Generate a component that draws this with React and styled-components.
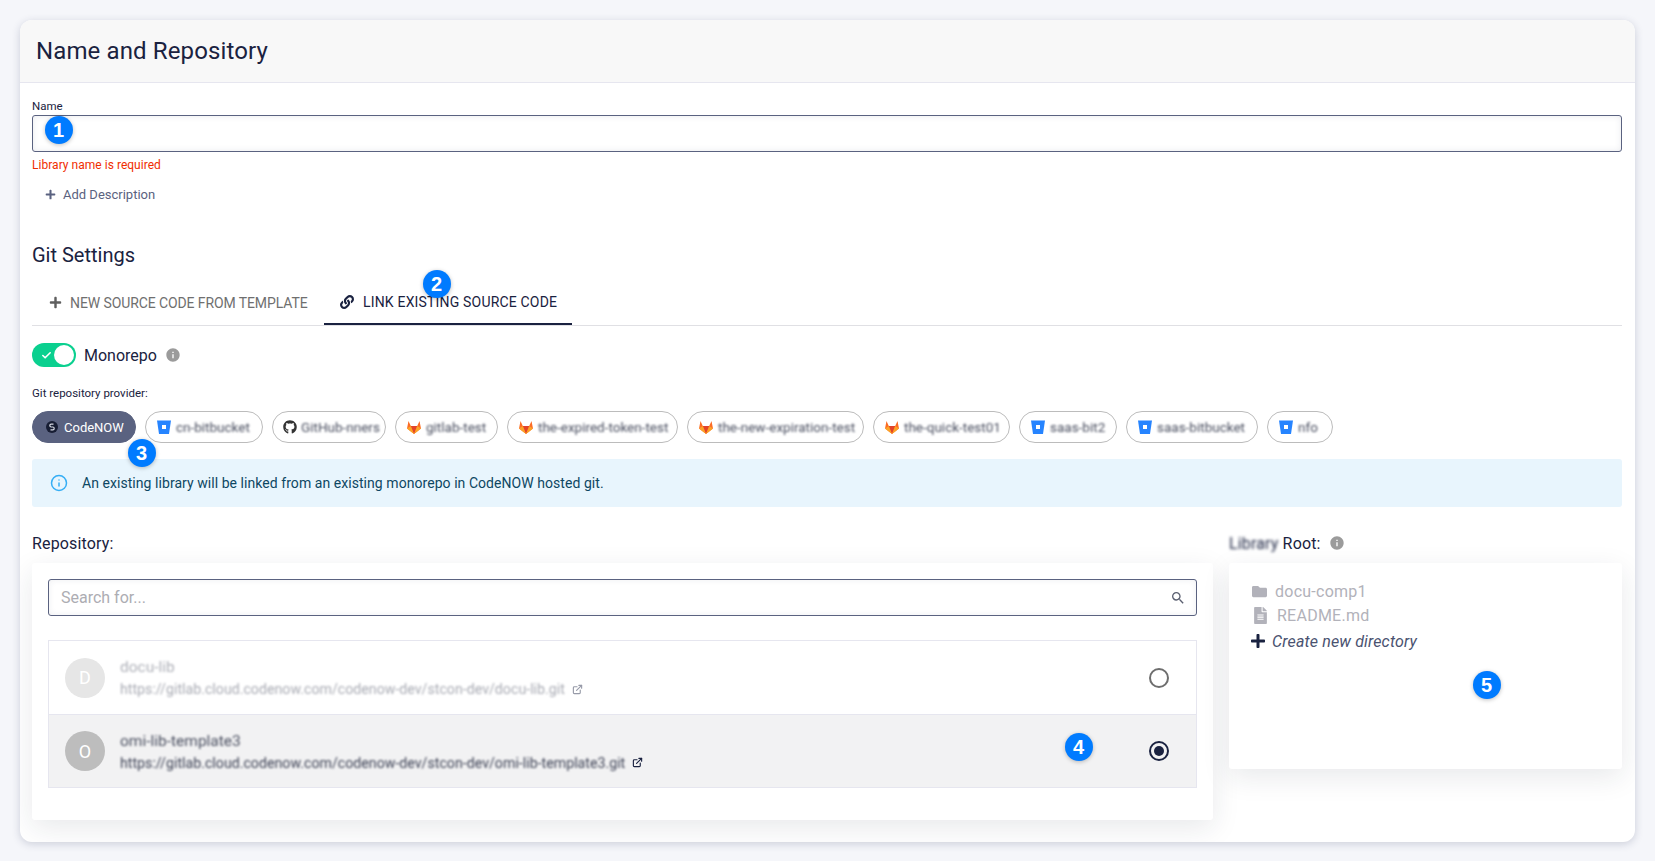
import React from "react";
import styled, { createGlobalStyle } from "styled-components";
import { FaGithub, FaLink, FaPlus, FaFolder, FaFileAlt } from "react-icons/fa";
import { MdInfo, MdSearch } from "react-icons/md";
import { Info, ExternalLink, Check } from "lucide-react";

const Global = createGlobalStyle`
  html, body { margin: 0; padding: 0; background: #f5f6fa; }
  body { font-family: Roboto, "Liberation Sans", sans-serif; color: #1a2240; }
  * { box-sizing: border-box; }
`;

const Card = styled.div`
  position: relative;
  margin: 20px 20px 20px;
  height: 822px;
  background: #fff;
  border-radius: 12px;
  box-shadow: 0 2px 8px rgba(40, 50, 90, 0.2);
  overflow: hidden;
`;
const Header = styled.div`
  height: 63px;
  padding-left: 16px;
  display: flex;
  align-items: center;
  background: #f8f8f8;
  border-bottom: 1.5px solid #e6e6ef;
`;
const Title = styled.h1`
  margin: 0;
  font-size: 24px;
  font-weight: 400;
  letter-spacing: 0.12px;
  color: #1a2240;
`;
const Body = styled.div`
  padding: 0 13px 0 12px;
`;
const SmallLabel = styled.div`
  font-size: 11.5px;
  line-height: 14px;
  margin-top: ${(p) => p.$mt}px;
  color: #1a2240;
`;
const NameInput = styled.div`
  height: 37px;
  margin-top: 2px;
  border: 1px solid #5a6280;
  border-radius: 3px;
  box-shadow: inset 0 0 6px rgba(40, 50, 90, 0.1);
`;
const ErrorText = styled.div`
  margin-top: 6px;
  font-size: 12px;
  letter-spacing: 0.03px;
  line-height: 14px;
  color: #f02d00;
`;
const AddRow = styled.div`
  display: flex;
  align-items: center;
  gap: 7px;
  height: 24px;
  margin-top: 10px;
  padding-left: 13px;
  font-size: 13px;
  color: #5a6280;
`;
const SectionTitle = styled.h2`
  margin: 35px 0 0;
  font-size: 20px;
  line-height: 28px;
  font-weight: 400;
`;
const Tabs = styled.div`
  display: flex;
  margin-top: 9px;
  border-bottom: 1px solid #e0e0e4;
`;
const Tab = styled.div`
  height: 47px;
  width: ${(p) => p.$w}px;
  padding: 2px 0 0 ${(p) => p.$pl}px;
  display: flex;
  align-items: center;
  gap: ${(p) => (p.$active ? 9 : 8)}px;
  font-size: 14px;
  letter-spacing: ${(p) => (p.$active ? "0.18px" : "-0.1px")};
  white-space: nowrap;
  color: ${(p) => (p.$active ? "#1a2240" : "#6f6f6f")};
  border-bottom: ${(p) => (p.$active ? "2.5px solid #1a2240" : "none")};
`;
const ToggleRow = styled.div`
  display: flex;
  align-items: center;
  height: 24px;
  margin-top: 17px;
  font-size: 16px;
`;
const Toggle = styled.div`
  position: relative;
  width: 44px;
  height: 24px;
  margin-right: 8px;
  border-radius: 12px;
  background: #0ad08f;
  display: flex;
  align-items: center;
  padding-left: 9px;
  color: #fff;
`;
const Knob = styled.span`
  position: absolute;
  right: 2px;
  top: 2px;
  width: 20px;
  height: 20px;
  border-radius: 50%;
  background: #fff;
`;
const InfoDot = styled(MdInfo)`
  color: #9b9b9b;
  margin-left: ${(p) => p.$ml}px;
`;
const Chips = styled.div`
  display: flex;
  gap: 9px;
  margin-top: 11px;
`;
const Chip = styled.div`
  width: ${(p) => p.$w}px;
  height: 32px;
  padding-left: ${(p) => (p.$selected ? 13 : 10)}px;
  display: flex;
  align-items: center;
  gap: ${(p) => (p.$selected ? 6 : 4)}px;
  flex: none;
  border-radius: 16px;
  font-size: ${(p) => (p.$selected ? 13 : 13.5)}px;
  white-space: nowrap;
  overflow: hidden;
  color: ${(p) => (p.$selected ? "#fff" : "#4a4f60")};
  background: ${(p) => (p.$selected ? "#5a6280" : "#fff")};
  border: 1px solid ${(p) => (p.$selected ? "#5a6280" : "#bcbcbc")};
`;
const Blur = styled.span`
  filter: blur(${(p) => p.$r || 1.2}px);
`;
const Alert = styled.div`
  display: flex;
  align-items: center;
  gap: 14px;
  height: 48px;
  margin-top: 16px;
  padding: 0 0 0 18px;
  border-radius: 3px;
  background: #e8f5fd;
  color: #0d4763;
  font-size: 14px;
  letter-spacing: 0.055px;
`;
const AlertIcon = styled(Info)`
  color: #35aef5;
`;
const Columns = styled.div`
  display: flex;
  gap: 16px;
  margin-top: 24px;
`;
const LeftCol = styled.div`
  width: 1181px;
  flex: none;
`;
const RightCol = styled.div`
  flex: 1;
`;
const ColLabel = styled.div`
  display: flex;
  align-items: center;
  height: 24px;
  font-size: 16px;
  letter-spacing: 0.15px;
`;
const Panel = styled.div`
  margin-top: 8px;
  height: ${(p) => p.$h}px;
  padding: ${(p) => p.$pad};
  background: #fff;
  border-radius: 3px;
  box-shadow: 0 8px 28px rgba(30, 35, 60, 0.1);
`;
const Search = styled.div`
  height: 37px;
  padding: 0 10px 0 12px;
  display: flex;
  align-items: center;
  justify-content: space-between;
  border: 1px solid #5a6280;
  border-radius: 3px;
  color: #adadb3;
  font-size: 16px;
  box-shadow: inset 0 0 6px rgba(40, 50, 90, 0.08);
`;
const SearchIcon = styled(MdSearch)`
  color: #5a5f70;
`;
const List = styled.div`
  margin-top: 24px;
  border: 1px solid #e6e6ef;
`;
const Row = styled.div`
  display: flex;
  align-items: center;
  height: 73px;
  padding: 0 27px 0 16px;
  background: ${(p) => (p.$selected ? "#f2f2f3" : "#fff")};
  border-top: ${(p) => (p.$selected ? "1.5px solid #e6e6ef" : "none")};
`;
const Avatar = styled.div`
  width: 40px;
  height: 40px;
  flex: none;
  border-radius: 50%;
  display: flex;
  align-items: center;
  justify-content: center;
  color: #fff;
  font-size: 18px;
  background: ${(p) => (p.$selected ? "#bdbdbd" : "#e6e6e6")};
`;
const RowText = styled.div`
  flex: 1;
  margin-left: 15px;
  opacity: ${(p) => (p.$selected ? 1 : 0.45)};
`;
const RepoName = styled.div`
  font-size: 15.5px;
  line-height: 20px;
  color: #4a4f60;
`;
const RepoUrl = styled.div`
  display: flex;
  align-items: center;
  gap: 7px;
  margin-top: 3px;
  font-size: 14.2px;
  line-height: 18px;
  color: #3e4356;
`;
const ExtIcon = styled(ExternalLink)`
  color: #1a2240;
`;
const Radio = styled.span`
  width: 20px;
  height: 20px;
  flex: none;
  border-radius: 50%;
  border: 2px solid ${(p) => (p.$on ? "#1a2240" : "#6e6e6e")};
  display: flex;
  align-items: center;
  justify-content: center;
  &::after {
    content: "";
    width: 10px;
    height: 10px;
    border-radius: 50%;
    background: ${(p) => (p.$on ? "#1a2240" : "transparent")};
  }
`;
const TreeRow = styled.div`
  display: flex;
  align-items: center;
  gap: ${(p) => p.$gap}px;
  height: 24px;
  padding-left: 23px;
  font-size: 16px;
  letter-spacing: 0.25px;
  color: #b2b2ba;
`;
const CreateRow = styled(TreeRow)`
  margin-top: 2px;
  padding-left: 21px;
  gap: 6px;
  font-style: italic;
  letter-spacing: 0.15px;
  color: #4a5270;
`;
const Badge = styled.span`
  position: absolute;
  left: ${(p) => p.$x - 14}px;
  top: ${(p) => p.$y - 14}px;
  width: 28px;
  height: 28px;
  border-radius: 50%;
  background: #007bff;
  color: #fff;
  display: flex;
  align-items: center;
  justify-content: center;
  font: 700 20px "Liberation Sans", Arial, sans-serif;
  box-shadow: 0 1px 4px rgba(0, 0, 0, 0.25);
`;

const CodeNowMark = () => (
  <svg width="12" height="12" viewBox="0 0 12 12" style={{ flex: "none" }}>
    <circle cx="6" cy="6" r="6" fill="#171d33" />
    <path d="M7.5 3.2H5.2a1.4 1.4 0 0 0 0 2.8h1.6a1.4 1.4 0 0 1 0 2.8H4.5" fill="none" stroke="#d5d8e2" strokeWidth="1.2" />
  </svg>
);
const Bitbucket = () => (
  <svg width="16" height="16" viewBox="0 0 16 16" style={{ flex: "none" }}>
    <path d="M1 1.5h14l-2 13.5H3z" fill="#2684ff" />
    <rect x="6" y="6" width="4" height="4" fill="#fff" />
  </svg>
);
const Gitlab = () => (
  <svg width="16" height="16" viewBox="0 0 16 16" style={{ flex: "none" }}>
    <path d="M8 15 1 9.5 2.5 2l2.3 5h6.4l2.3-5L15 9.5z" fill="#fc6d26" />
    <path d="M8 15 4.8 7h6.4z" fill="#e24329" />
    <path d="M8 15 1 9.5l3.8-2.5zM8 15l7-5.5L11.2 7z" fill="#fca326" />
  </svg>
);

const providers = [
  { w: 118, icon: <Bitbucket />, label: "cn-bitbucket" },
  { w: 114, icon: <FaGithub size={14} color="#333" />, label: "GitHub-nners" },
  { w: 103, icon: <Gitlab />, label: "gitlab-test" },
  { w: 171, icon: <Gitlab />, label: "the-expired-token-test" },
  { w: 177, icon: <Gitlab />, label: "the-new-expiration-test" },
  { w: 137, icon: <Gitlab />, label: "the-quick-test01" },
  { w: 98, icon: <Bitbucket />, label: "saas-bit2" },
  { w: 132, icon: <Bitbucket />, label: "saas-bitbucket" },
  { w: 66, icon: <Bitbucket />, label: "nfo" },
];

export default function App() {
  return (
    <>
      <Global />
      <Card>
        <Header>
          <Title>Name and Repository</Title>
        </Header>
        <Body>
          <SmallLabel $mt={16}>Name</SmallLabel>
          <NameInput />
          <ErrorText>Library name is required</ErrorText>
          <AddRow>
            <FaPlus size={11} />
            Add Description
          </AddRow>
          <SectionTitle>Git Settings</SectionTitle>
          <Tabs>
            <Tab $w={292} $pl={17}>
              <FaPlus size={13} color="#5f5f5f" />
              NEW SOURCE CODE FROM TEMPLATE
            </Tab>
            <Tab $active $w={248} $pl={16}>
              <FaLink size={14} />
              LINK EXISTING SOURCE CODE
            </Tab>
          </Tabs>
          <ToggleRow>
            <Toggle>
              <Check size={11} strokeWidth={3.5} />
              <Knob />
            </Toggle>
            Monorepo
            <InfoDot size={16} $ml={8} />
          </ToggleRow>
          <SmallLabel $mt={19}>Git repository provider:</SmallLabel>
          <Chips>
            <Chip $selected $w={104}>
              <CodeNowMark />
              CodeNOW
            </Chip>
            {providers.map((p) => (
              <Chip key={p.label} $w={p.w}>
                {p.icon}
                <Blur>{p.label}</Blur>
              </Chip>
            ))}
          </Chips>
          <Alert>
            <AlertIcon size={18} />
            An existing library will be linked from an existing monorepo in CodeNOW hosted git.
          </Alert>
          <Columns>
            <LeftCol>
              <ColLabel>Repository:</ColLabel>
              <Panel $h={257} $pad="16px">
                <Search>
                  Search for...
                  <SearchIcon size={16} />
                </Search>
                <List>
                  <Row>
                    <Avatar>D</Avatar>
                    <RowText>
                      <RepoName><Blur>docu-lib</Blur></RepoName>
                      <RepoUrl>
                        <Blur>https://gitlab.cloud.codenow.com/codenow-dev/stcon-dev/docu-lib.git</Blur>
                        <ExtIcon size={11} strokeWidth={2.5} />
                      </RepoUrl>
                    </RowText>
                    <Radio />
                  </Row>
                  <Row $selected>
                    <Avatar $selected>O</Avatar>
                    <RowText $selected>
                      <RepoName><Blur>omi-lib-template3</Blur></RepoName>
                      <RepoUrl>
                        <Blur>https://gitlab.cloud.codenow.com/codenow-dev/stcon-dev/omi-lib-template3.git</Blur>
                        <ExtIcon size={11} strokeWidth={2.5} />
                      </RepoUrl>
                    </RowText>
                    <Radio $on />
                  </Row>
                </List>
              </Panel>
            </LeftCol>
            <RightCol>
              <ColLabel>
                <Blur $r={1.6}>Library</Blur>&nbsp;Root:
                <InfoDot size={16} $ml={8} />
              </ColLabel>
              <Panel $h={206} $pad="16px 0 0 0">
                <TreeRow $gap={8}>
                  <FaFolder size={15} />
                  docu-comp1
                </TreeRow>
                <TreeRow $gap={8}>
                  <FaFileAlt size={17} />
                  README.md
                </TreeRow>
                <CreateRow>
                  <FaPlus size={16} color="#1a2240" />
                  Create new directory
                </CreateRow>
              </Panel>
            </RightCol>
          </Columns>
        </Body>
        <Badge $x={38.5} $y={110}>1</Badge>
        <Badge $x={416.5} $y={264}>2</Badge>
        <Badge $x={121.5} $y={433}>3</Badge>
        <Badge $x={1058.5} $y={727}>4</Badge>
        <Badge $x={1466.5} $y={665}>5</Badge>
      </Card>
    </>
  );
}
